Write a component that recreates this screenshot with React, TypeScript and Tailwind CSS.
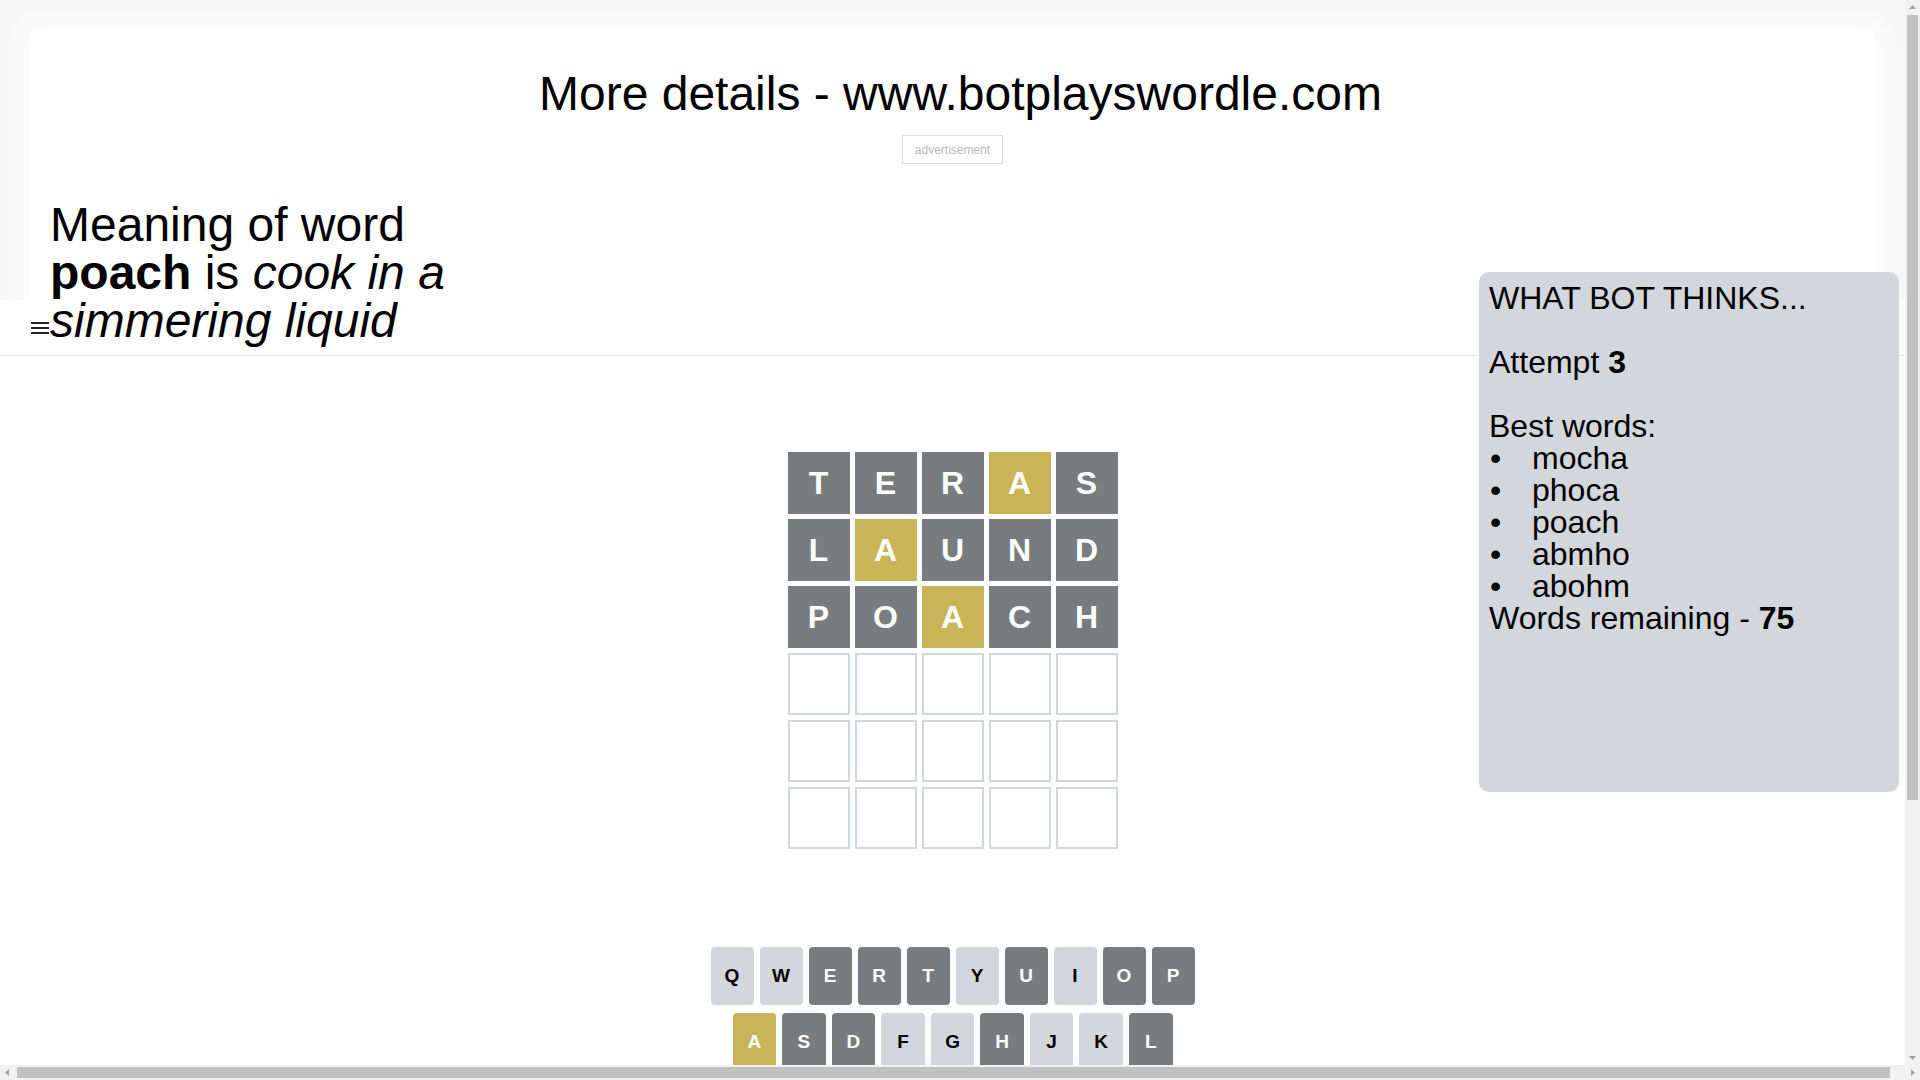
import React from "react";

type C = "g" | "y" | "l";

const guesses: [string, C][][] = [
  [["T", "g"], ["E", "g"], ["R", "g"], ["A", "y"], ["S", "g"]],
  [["L", "g"], ["A", "y"], ["U", "g"], ["N", "g"], ["D", "g"]],
  [["P", "g"], ["O", "g"], ["A", "y"], ["C", "g"], ["H", "g"]],
];

const row1: [string, C][] = [
  ["Q", "l"], ["W", "l"], ["E", "g"], ["R", "g"], ["T", "g"], ["Y", "l"], ["U", "g"], ["I", "l"], ["O", "g"], ["P", "g"],
];
const row2: [string, C][] = [
  ["A", "y"], ["S", "g"], ["D", "g"], ["F", "l"], ["G", "l"], ["H", "g"], ["J", "l"], ["K", "l"], ["L", "g"],
];

const best = ["mocha", "phoca", "poach", "abmho", "abohm"];

function Tile({ letter, c }: { letter?: string; c?: C }) {
  if (!letter) {
    return <div className="w-[62px] h-[62px] border-2 border-[#d3d6da] bg-white" />;
  }
  return (
    <div
      className={
        "w-[62px] h-[62px] flex items-center justify-center text-white font-bold text-[32px] " +
        (c === "y" ? "bg-[#c9b458]" : "bg-[#787c7e]")
      }
    >
      {letter}
    </div>
  );
}

function Key({ k, c }: { k: string; c: C }) {
  const cls =
    c === "y"
      ? "bg-[#c9b458] text-white"
      : c === "g"
      ? "bg-[#787c7e] text-white"
      : "bg-[#d3d6da] text-black";
  return (
    <div className={"flex-1 h-[58px] rounded-[4px] flex items-center justify-center font-bold text-[19px] " + cls}>
      {k}
    </div>
  );
}

function Arrow({ dir }: { dir: "up" | "down" | "left" | "right" }) {
  const pts =
    dir === "up"
      ? "4,9 11,9 7.5,5"
      : dir === "down"
      ? "4,6 11,6 7.5,10"
      : dir === "left"
      ? "9,4 9,11 5,7.5"
      : "6,4 6,11 10,7.5";
  return (
    <svg width="15" height="15" viewBox="0 0 15 15" className="shrink-0">
      <polygon points={pts} fill="#a3a3a3" />
    </svg>
  );
}

export default function App() {
  const empty = [0, 1, 2];
  return (
    <div className="w-[1920px] h-[1080px] overflow-hidden flex flex-col bg-white font-['Liberation_Sans',Arial,sans-serif] text-black">
      <div className="flex h-[1065px]">
        {/* page content */}
        <div className="relative w-[1905px] h-[1065px] overflow-hidden flex flex-col">
          {/* ad region */}
          <div className="relative h-[300px] shrink-0 bg-[#f6f6f6] overflow-hidden">
            <div className="absolute left-[30px] right-[30px] top-[30px] bottom-[-60px] bg-white shadow-[0_0_30px_10px_#ffffff]" />
            <div className="relative flex flex-col items-center pt-[66px]">
              <h1 className="text-[48px] leading-[55px] font-normal pl-[16px]">More details - www.botplayswordle.com</h1>
              <div className="mt-[14px] w-[101px] h-[29px] border border-[#dcdcdc] bg-white flex items-center justify-center text-[12px] text-[#b8b8b8]">
                advertisement
              </div>
            </div>
          </div>

          {/* header bar */}
          <div className="h-[56px] shrink-0 border-b border-[#e4e4e4] flex items-center pl-[31px] bg-white">
            <svg width="18" height="12" viewBox="0 0 18 12">
              <rect x="0" y="0" width="18" height="2" fill="#222" />
              <rect x="0" y="5" width="18" height="2" fill="#222" />
              <rect x="0" y="10" width="18" height="2" fill="#222" />
            </svg>
          </div>

          {/* board */}
          <div className="flex justify-center pt-[96px]">
            <div className="flex flex-col gap-[5px]">
              {guesses.map((r, i) => (
                <div key={i} className="flex gap-[5px]">
                  {r.map(([l, c], j) => (
                    <Tile key={j} letter={l} c={c} />
                  ))}
                </div>
              ))}
              {empty.map((i) => (
                <div key={"e" + i} className="flex gap-[5px]">
                  {[0, 1, 2, 3, 4].map((j) => (
                    <Tile key={j} />
                  ))}
                </div>
              ))}
            </div>
          </div>

          {/* keyboard */}
          <div className="flex justify-center pt-[98px]">
            <div className="w-[484px] flex flex-col gap-[8px]">
              <div className="flex gap-[6px]">
                {row1.map(([k, c]) => (
                  <Key key={k} k={k} c={c} />
                ))}
              </div>
              <div className="flex gap-[6px] px-[22px]">
                {row2.map(([k, c]) => (
                  <Key key={k} k={k} c={c} />
                ))}
              </div>
            </div>
          </div>

          {/* word meaning overlay */}
          <div className="absolute left-[50px] top-[201px] w-[420px] text-[48px] leading-[48px]">
            Meaning of word <b>poach</b> is <i>cook in a simmering liquid</i>
          </div>

          {/* bot panel */}
          <div className="absolute left-[1479px] top-[272px] w-[420px] h-[520px] rounded-[10px] bg-[#d3d6da] px-[10px] pt-[10px] text-[32px] leading-[32px]">
            <div>WHAT BOT THINKS...</div>
            <div className="h-[32px]" />
            <div>
              Attempt <b>3</b>
            </div>
            <div className="h-[32px]" />
            <div>Best words:</div>
            <ul>
              {best.map((w) => (
                <li key={w} className="flex">
                  <span className="w-[43px] shrink-0 pl-[1px]">•</span>
                  <span>{w}</span>
                </li>
              ))}
            </ul>
            <div>
              Words remaining - <b>75</b>
            </div>
          </div>
        </div>

        {/* vertical scrollbar */}
        <div className="w-[15px] h-[1065px] bg-[#f1f1f1] flex flex-col">
          <Arrow dir="up" />
          <div className="mx-[2px] h-[785px] bg-[#c1c1c1]" />
          <div className="flex-1" />
          <Arrow dir="down" />
        </div>
      </div>

      {/* horizontal scrollbar */}
      <div className="h-[15px] w-[1920px] bg-[#f1f1f1] flex items-center">
        <Arrow dir="left" />
        <div className="ml-[2px] w-[1873px] h-[11px] bg-[#c1c1c1]" />
        <div className="flex-1" />
        <Arrow dir="right" />
      </div>
    </div>
  );
}
